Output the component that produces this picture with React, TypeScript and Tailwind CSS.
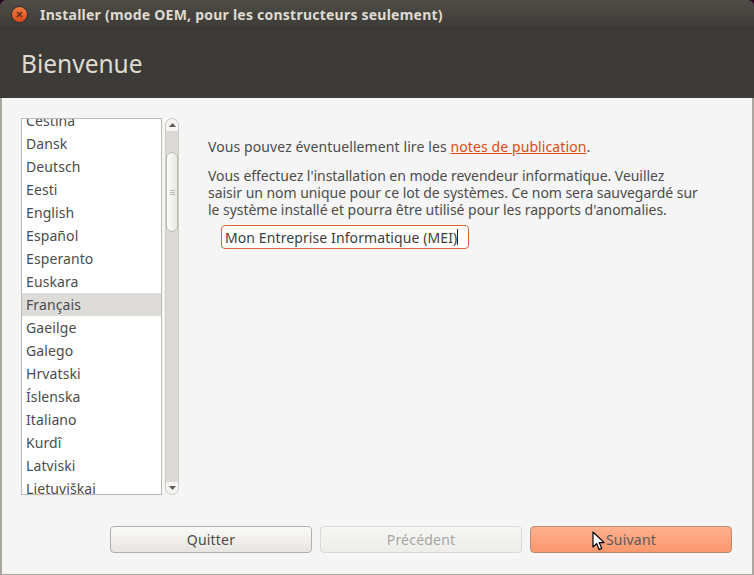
const LANGUAGES = ["Dansk", "Deutsch", "Eesti", "English", "Español", "Esperanto", "Euskara", "Français", "Gaeilge", "Galego", "Hrvatski", "Íslenska", "Italiano", "Kurdî", "Latviski"];

const FONT = "font-['Noto_Sans','Open_Sans',sans-serif]";

function Scrollbar() {
  return (
    <div className="ml-[3px] flex w-[14px] flex-col overflow-hidden rounded-[7px] border border-[#cfcbc5] bg-[#dcdad7]">
      <div className="flex h-[12px] shrink-0 items-center justify-center bg-[#f6f5f4]">
        <svg width="7" height="4" viewBox="0 0 7 4"><path d="M3.5 0 7 4H0z" fill="#5c5a56" /></svg>
      </div>
      <div className="mt-[21px] flex h-[80px] shrink-0 items-center justify-center rounded-[7px] border border-[#bdb9b3] bg-gradient-to-r from-[#fbfbfa] to-[#e9e7e5]">
        <div className="flex flex-col gap-px">
          <div className="h-px w-[5px] bg-[#bcb8b2]" />
          <div className="h-px w-[5px] bg-[#bcb8b2]" />
          <div className="h-px w-[5px] bg-[#bcb8b2]" />
        </div>
      </div>
      <div className="flex-1" />
      <div className="flex h-[12px] shrink-0 items-center justify-center bg-[#f6f5f4]">
        <svg width="7" height="4" viewBox="0 0 7 4"><path d="M0 0h7L3.5 4z" fill="#5c5a56" /></svg>
      </div>
    </div>
  );
}

export default function App() {
  return (
    <div className={`relative flex h-[575px] w-[754px] flex-col overflow-hidden bg-[#2c001e] text-[14px] text-[#4c4c4c] ${FONT}`}>
      {/* title bar */}
      <div className="flex h-[29px] shrink-0 items-center rounded-t-[6px] border-b border-[#37352f] bg-gradient-to-b from-[#4f4d47] to-[#3d3b37] pl-[12px]">
        <div className="flex h-[15px] w-[15px] items-center justify-center rounded-full bg-gradient-to-b from-[#f2793f] to-[#d9481a] ring-1 ring-[#33312d]">
          <svg width="7" height="7" viewBox="0 0 7 7"><path d="M1 1l5 5M6 1 1 6" stroke="#4a2a1a" strokeWidth="1.2" /></svg>
        </div>
        <span className="ml-[13px] text-[14px] font-bold tracking-[0.23px] text-[#dfdbd2]">Installer (mode OEM, pour les constructeurs seulement)</span>
      </div>

      {/* header */}
      <div className="flex h-[69px] shrink-0 items-center bg-[#3c3b37] pl-[21px] pt-[2px]">
        <h1 className="text-[24.5px] leading-none text-[#dfdbd2]">Bienvenue</h1>
      </div>

      {/* body */}
      <div className="flex flex-1 flex-col border-x-2 border-b border-[#aba7a0] bg-[#f5f5f5] pl-[19px] pr-[20px] pt-[20px]">
        <div className="flex h-[377px]">
          <div className="flex h-full w-[141px] flex-col overflow-hidden border border-[#bdb9b3] bg-white tracking-[0.1px]">
            <div className="mt-[-10px] flex h-[23px] shrink-0 items-center pl-[4px] text-[14px]">Čeština</div>
            {LANGUAGES.map((lang) => (
              <div key={lang} className={`flex h-[23px] shrink-0 items-center pl-[4px] text-[14px] ${lang === "Français" ? "bg-[#dedcd9]" : ""}`}>
                {lang}
              </div>
            ))}
            <div className="flex h-[23px] shrink-0 items-center pl-[4px] text-[14px]">Lietuviškai</div>
          </div>
          <Scrollbar />

          <div className="ml-[29px] flex w-[500px] flex-col pt-[20px] text-[14px] leading-[17px]">
            <p className="tracking-[0.1px]">
              Vous pouvez éventuellement lire les <span className="text-[#dd4814] underline">notes de publication</span>.
            </p>
            <p className="mt-[12px] tracking-[-0.04px]">
              Vous effectuez l'installation en mode revendeur informatique. Veuillez
              <br />
              saisir un nom unique pour ce lot de systèmes. Ce nom sera sauvegardé sur
              <br />
              le système installé et pourra être utilisé pour les rapports d'anomalies.
            </p>
            <div className="ml-[13px] mt-[7px] flex h-[24px] w-[248px] items-center rounded-[4px] border border-[#d9643a] bg-white pl-[3px] tracking-[0.1px] text-[#3c3c3c]">
              <span>Mon Entreprise Informatique (MEI)</span>
              <span className="h-[16px] w-px bg-[#222]" />
            </div>
          </div>
        </div>

        {/* buttons */}
        <div className="mt-[31px] flex justify-end gap-[8px] tracking-[0.2px]">
          <button className="h-[27px] w-[202px] rounded-[4px] border border-[#b5b1aa] bg-gradient-to-b from-[#fafaf9] to-[#e6e4e1] text-[14px] text-[#4c4c4c]">Quitter</button>
          <button className="h-[27px] w-[202px] rounded-[4px] border border-[#dbd9d6] bg-gradient-to-b from-[#f6f6f5] to-[#eeedeb] text-[14px] text-[#a8a6a2]">Précédent</button>
          <button className="h-[27px] w-[202px] rounded-[4px] border border-[#b98a72] bg-gradient-to-b from-[#ffb08f] to-[#fa976c] text-[14px] text-[#5c5a58]">Suivant</button>
        </div>
      </div>

      {/* mouse pointer */}
      <svg className="absolute left-[592px] top-[531px]" width="13" height="20" viewBox="0 0 13 20">
        <path d="M1 1v15l3.6-3.4 2.6 6 2.6-1.1-2.6-5.9h5z" fill="#fff" stroke="#000" strokeWidth="1.2" strokeLinejoin="round" />
      </svg>
    </div>
  );
}
